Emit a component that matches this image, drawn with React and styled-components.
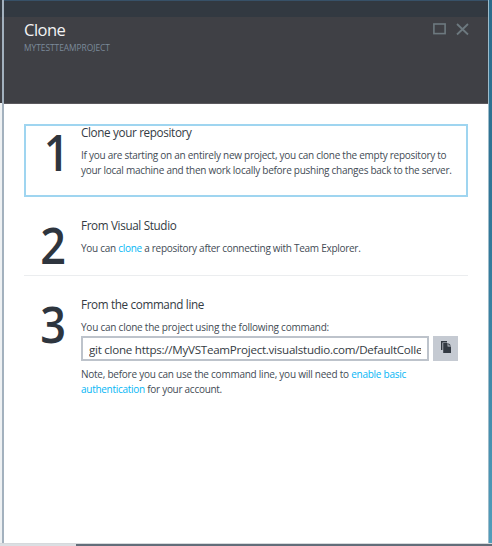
import React from "react";
import styled, { createGlobalStyle } from "styled-components";

const Global = createGlobalStyle`
  *, *::before, *::after { box-sizing: border-box; }
  html, body { margin: 0; overflow: hidden; }
  body { font-family: "Open Sans", "Noto Sans", sans-serif; color: #434b55; background: #fff; }
`;

const Window = styled.div`
  width: 492px;
  height: 546px;
  display: grid;
  grid-template-rows: 543px 3px;
`;
const Middle = styled.div`
  display: grid;
  grid-template-columns: 4px 1fr 4px;
`;
const LeftEdge = styled.div`
  border-right: 2px solid #a3b1be;
  background: linear-gradient(#323941 0 17px, #3f4045 17px 103px, #eef1f3 103px);
`;
const RightEdge = styled.div`
  border-left: 1px solid #9dbccb;
  background: linear-gradient(#2b6b8b, #32799a 45%, #529dbb);
`;
const Blade = styled.main`
  display: flex;
  flex-direction: column;
  min-width: 0;
  background: #fff;
`;
const Header = styled.header`
  height: 104px;
  flex: none;
  display: flex;
  justify-content: space-between;
  padding: 16px 19px 0 20px;
  border-top: 1px solid #375168;
  border-bottom: 1px solid #5b595e;
  background: linear-gradient(#323941 0 16px, #3f4045 16px);
`;
const Title = styled.h1`
  margin: 0;
  font-size: 16.5px;
  line-height: 25px;
  font-weight: 400;
  letter-spacing: -0.5px;
  color: #f2f3f4;
`;
const Subtitle = styled.div`
  font-size: 8.4px;
  line-height: 11px;
  letter-spacing: -0.02px;
  color: #7b8a9a;
`;
const Controls = styled.div`
  display: flex;
  gap: 10px;
  padding-top: 6px;
`;

const Steps = styled.div`
  display: flex;
  flex-direction: column;
  padding: 20px 20px 0 20px;
`;
const Step = styled.section`
  width: 444px;
  height: ${(p) => p.$height}px;
  display: grid;
  grid-template-columns: 57px 1fr;
  padding-top: ${(p) => p.$top}px;
  border-bottom: ${(p) => (p.$divided ? "1px solid #ebedef" : "0")};
  box-shadow: ${(p) => (p.$focused ? "inset 0 0 0 2px #9fd5f0" : "none")};
`;
const Numeral = styled.div`
  padding-right: ${(p) => p.$inset ?? 15}px;
  padding-top: 2px;
  height: 52px;
  text-align: right;
  font-size: 50px;
  line-height: 50px;
  font-weight: 600;
  color: #2e353e;
  transform: scaleX(0.9);
  transform-origin: 41px 50%;
`;
const Content = styled.div`
  min-width: 0;
`;
const Heading = styled.h2`
  margin: 0 0 8px;
  font-size: 11.7px;
  line-height: 15px;
  font-weight: 400;
  letter-spacing: -0.35px;
  color: #343b43;
`;
const Line = styled.div`
  font-size: 10px;
  line-height: 15px;
  letter-spacing: ${(p) => p.$track ?? -0.265}px;
  white-space: nowrap;
`;
const Link = styled.a`
  color: #05b6f5;
`;
const CommandRow = styled.div`
  display: flex;
  gap: 4px;
  margin: 1px 0 6px;
`;
const Command = styled.div`
  width: 348px;
  height: 25px;
  padding: 0 6px;
  border: 2px solid #bdc3cb;
  font-size: 11.6px;
  line-height: 23px;
  letter-spacing: -0.26px;
  color: #343b43;
`;
const CommandText = styled.div`
  height: 21px;
  overflow: hidden;
  white-space: nowrap;
`;
const CopyButton = styled.button`
  width: 25px;
  height: 25px;
  padding: 0 0 4px;
  border: 0;
  display: flex;
  align-items: center;
  justify-content: center;
  background: #c5cad2;
`;
const Footer = styled.div`
  border-top: 1px solid #d6d9dc;
  background: linear-gradient(90deg, #dbdfe3 0 76px, #626d79 76px);
`;

const MaximizeIcon = () => (
  <svg width="13" height="12" viewBox="0 0 13 12" fill="none" stroke="#6d797f" strokeWidth="1.6">
    <rect x="0.9" y="1" width="11.2" height="9.6" />
  </svg>
);
const CloseIcon = () => (
  <svg width="13" height="13" viewBox="0 0 13 13" fill="none" stroke="#6d797f" strokeWidth="1.8">
    <path d="M1 1L12 11.5M12 1L1 11.5" />
  </svg>
);
const CopyIcon = () => (
  <svg width="12" height="14" viewBox="0 0 12 14">
    <path d="M1 1H7V2.4H2.4V10H1Z" fill="#323942" />
    <path d="M3.2 3H7.6V6.4H11V13H3.2Z" fill="#323942" />
    <path d="M8.4 3L11 5.6H8.4Z" fill="#323942" />
  </svg>
);

export default function App() {
  return (
    <Window>
      <Global />
      <Middle>
        <LeftEdge />
        <Blade>
          <Header>
            <div>
              <Title>Clone</Title>
              <Subtitle>MYTESTTEAMPROJECT</Subtitle>
            </div>
            <Controls>
              <MaximizeIcon />
              <CloseIcon />
            </Controls>
          </Header>
          <Steps>
            <Step $height={73} $top={1} $focused>
              <Numeral $inset={11}>1</Numeral>
              <Content>
                <Heading>Clone your repository</Heading>
                <Line>If you are starting on an entirely new project, you can clone the empty repository to</Line>
                <Line>your local machine and then work locally before pushing changes back to the server.</Line>
              </Content>
            </Step>
            <Step $height={79} $top={21} $divided>
              <Numeral>2</Numeral>
              <Content>
                <Heading>From Visual Studio</Heading>
                <Line $track={-0.28}>You can <Link>clone</Link> a repository after connecting with Team Explorer.</Line>
              </Content>
            </Step>
            <Step $height={130} $top={21}>
              <Numeral>3</Numeral>
              <Content>
                <Heading>From the command line</Heading>
                <Line $track={-0.23}>You can clone the project using the following command:</Line>
                <CommandRow>
                  <Command>
                    <CommandText>git clone https://MyVSTeamProject.visualstudio.com/DefaultColle</CommandText>
                  </Command>
                  <CopyButton aria-label="Copy">
                    <CopyIcon />
                  </CopyButton>
                </CommandRow>
                <Line $track={-0.245}>Note, before you can use the command line, you will need to <Link>enable basic</Link></Line>
                <Line $track={-0.28}><Link>authentication</Link> for your account.</Line>
              </Content>
            </Step>
          </Steps>
        </Blade>
        <RightEdge />
      </Middle>
      <Footer />
    </Window>
  );
}
